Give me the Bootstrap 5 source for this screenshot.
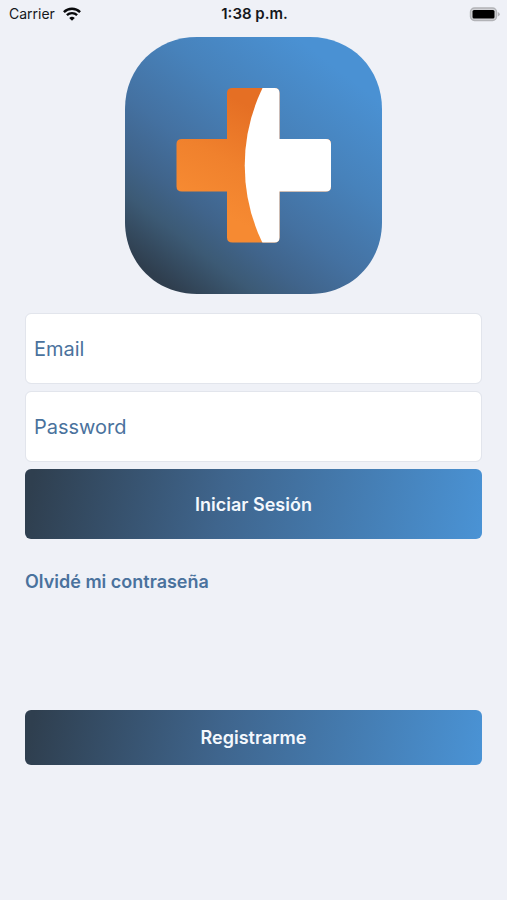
<!DOCTYPE html>
<html lang="es">
<head>
<meta charset="utf-8">
<meta name="viewport" content="width=device-width, initial-scale=1">
<title>Iniciar Sesión</title>
<link href="https://cdn.jsdelivr.net/npm/bootstrap@5.3.0/dist/css/bootstrap.min.css" rel="stylesheet">
<style>
  body { background: #eff1f7; font-family: Inter, "Liberation Sans", sans-serif; }
  .status-bar { height: 28px; padding: 0 7px 0 9px; font-size: 14px; line-height: 28px; color: #15171b; }
  .status-side { flex: 1 1 0; }
  .status-time { font-size: 15px; font-weight: 600; }
  .login-main { padding: 9px 25px 0; }
  .app-logo { width: 257px; height: 257px; }
  .login-form { margin-top: 19px; gap: 7px; }
  .login-field.form-floating > .form-control { height: 71px; padding-left: 8px; padding-right: 8px; border: 1px solid #e2e5ec; border-radius: 6px; font-size: 20px; color: #4a729d; }
  .login-field.form-floating > label { padding: 1px 8px 0; font-size: 20px; color: #4a729d; }
  .brand-btn { height: 70px; border: 0; border-radius: 6px; font-size: 18px; font-weight: 600; color: #f4f8fd; background: linear-gradient(100deg, #2f3f4f 2%, #3f658d 43%, #4a93d5 100%); }
  .brand-btn:hover, .brand-btn:focus { color: #fff; }
  .brand-btn-short { height: 55px; margin-top: 114px; }
  .forgot-link { margin-top: 29px; font-size: 18px; line-height: 28px; font-weight: 600; color: #4a729d; }
</style>
<script src="https://cdn.jsdelivr.net/npm/bootstrap@5.3.0/dist/js/bootstrap.bundle.min.js"></script>
</head>
<body>
<header class="status-bar d-flex align-items-center">
  <div class="status-side d-flex align-items-center">
    <span>Carrier</span>
    <svg class="ms-2" width="18" height="14" viewBox="0 0 18 14" fill="none" stroke="#08090b" stroke-width="2.4" aria-hidden="true">
      <path d="M.9 5.1a11.6 11.6 0 0 1 16.2 0"/>
      <path d="M3.9 8.2a7.4 7.4 0 0 1 10.2 0"/>
      <path d="M9 13.8 6.2 11a4 4 0 0 1 5.6 0z" fill="#08090b" stroke="none"/>
    </svg>
  </div>
  <span class="status-time">1:38 p.m.</span>
  <div class="status-side d-flex justify-content-end">
    <svg width="31" height="15" viewBox="0 0 31 15" aria-hidden="true">
      <rect x="1.500" y="1" width="26" height="12.500" rx="4" fill="#d0d1d5" stroke="#b2b3b7" stroke-width="1.4"/>
      <rect x="3.500" y="3" width="22" height="8.500" rx="1.500" fill="#000"/>
      <path d="M28.800 5q2 .9 2 2.300t-2 2.300z" fill="#b2b3b7"/>
    </svg>
  </div>
</header>
<main class="login-main d-flex flex-column">
  <svg class="app-logo align-self-center" viewBox="0 0 257 257" role="img" aria-label="Logo">
    <defs>
      <linearGradient id="tile" gradientUnits="userSpaceOnUse" x1="32" y1="240" x2="200" y2="22">
        <stop offset="0" stop-color="#2f3e4e"/>
        <stop offset=".08" stop-color="#354b60"/>
        <stop offset=".17" stop-color="#3c5a75"/>
        <stop offset=".29" stop-color="#40648b"/>
        <stop offset=".45" stop-color="#4471a1"/>
        <stop offset=".7" stop-color="#4782bb"/>
        <stop offset="1" stop-color="#4a91d3"/>
      </linearGradient>
      <linearGradient id="flame" gradientUnits="userSpaceOnUse" x1="85" y1="170" x2="135" y2="75">
        <stop offset="0" stop-color="#f68a32"/>
        <stop offset=".45" stop-color="#f0812d"/>
        <stop offset="1" stop-color="#e56f24"/>
      </linearGradient>
      <clipPath id="plus">
        <path d="M107.500 51H149.500Q154.500 51 154.500 56V102H201Q206 102 206 107V149.500Q206 154.500 201 154.500H154.500V200.500Q154.500 205.500 149.500 205.500H107.500Q102 205.500 102 200.500V154.500H57Q51.500 154.500 51.500 149.500V107Q51.500 102 57 102H102V56Q102 51 107.500 51Z"/>
      </clipPath>
    </defs>
    <path fill="url(#tile)" d="M72 0H185C227 0 257 32 257 72V185C257 227 225 257 185 257H72C30 257 0 225 0 185V72C0 30 32 0 72 0Z"/>
    <g clip-path="url(#plus)">
      <path fill="url(#flame)" d="M50 50h157v157H50z"/>
      <path fill="#fff" d="M137.500 51A178 178 0 0 0 137.500 206H207V51z"/>
    </g>
  </svg>
  <form class="login-form d-flex flex-column">
    <div class="login-field form-floating">
      <input class="form-control" type="email" id="email" placeholder=" ">
      <label class="d-flex align-items-center" for="email">Email</label>
    </div>
    <div class="login-field form-floating">
      <input class="form-control" type="password" id="password" placeholder=" ">
      <label class="d-flex align-items-center" for="password">Password</label>
    </div>
    <button class="brand-btn btn w-100" type="submit">Iniciar Sesión</button>
  </form>
  <a class="forgot-link align-self-start text-decoration-none" href="#">Olvidé mi contraseña</a>
  <button class="brand-btn brand-btn-short btn w-100" type="button">Registrarme</button>
</main>
</body>
</html>
